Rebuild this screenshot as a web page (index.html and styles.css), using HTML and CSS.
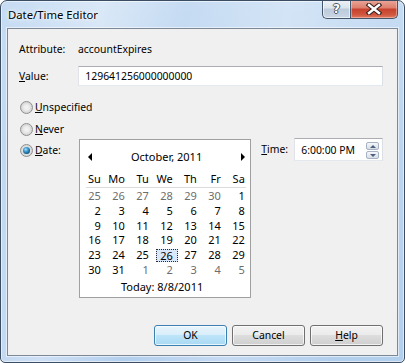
FILE: index.html
```html
<!DOCTYPE html>
<html>
<head>
<meta charset="utf-8">
<link rel="stylesheet" href="styles.css">
</head>
<body>
<div class="window">
  <div class="titlebar">
    <span class="title">Date/Time Editor</span>
    <div class="caption-btns">
      <div class="cap help"><span>?</span></div>
      <div class="cap close">
        <svg width="16" height="12" viewBox="0 0 16 12">
          <path d="M3 2 L13 10 M13 2 L3 10" stroke="#3a2220" stroke-width="4.6" stroke-linecap="square" fill="none"/>
          <path d="M3 2 L13 10 M13 2 L3 10" stroke="#ffffff" stroke-width="2.4" stroke-linecap="square" fill="none"/>
        </svg>
      </div>
    </div>
  </div>
  <div class="client">
    <div class="attr-row"><span class="attr-lbl">Attribute:</span><span>accountExpires</span></div>
    <div class="value-row"><span class="value-lbl"><u>V</u>alue:</span><div class="textbox">129641256000000000</div></div>
    <div class="radio-row first"><span class="radio"></span><span><u>U</u>nspecified</span></div>
    <div class="radio-row"><span class="radio"></span><span><u>N</u>ever</span></div>
    <div class="date-row">
      <div class="radio-row date-radio"><span class="radio checked"></span><span><u>D</u>ate:</span></div>
      <div class="calendar">
        <div class="cal-head"><span class="arr left"></span><span class="month">October, 2011</span><span class="arr right"></span></div>
        <div class="cal-days"><span>Su</span><span>Mo</span><span>Tu</span><span>We</span><span>Th</span><span>Fr</span><span>Sa</span></div>
        <div class="cal-sep"></div>
        <div class="cal-grid">
          <span class="g">25</span><span class="g">26</span><span class="g">27</span><span class="g">28</span><span class="g">29</span><span class="g">30</span><span>1</span>
          <span>2</span><span>3</span><span>4</span><span>5</span><span>6</span><span>7</span><span>8</span>
          <span>9</span><span>10</span><span>11</span><span>12</span><span>13</span><span>14</span><span>15</span>
          <span>16</span><span>17</span><span>18</span><span>19</span><span>20</span><span>21</span><span>22</span>
          <span>23</span><span>24</span><span>25</span><span class="sel"><span class="selbox">26</span></span><span>27</span><span>28</span><span>29</span>
          <span>30</span><span>31</span><span class="g">1</span><span class="g">2</span><span class="g">3</span><span class="g">4</span><span class="g">5</span>
        </div>
        <div class="cal-today">Today: 8/8/2011</div>
      </div>
      <span class="time-lbl"><u>T</u>ime:</span>
      <div class="timebox">
        <span class="time-text">6:00:00 PM</span>
        <div class="spin"><div class="spin-btn up"><span></span></div><div class="spin-btn down"><span></span></div></div>
      </div>
    </div>
    <div class="buttons">
      <div class="btn default">OK</div>
      <div class="btn">Cancel</div>
      <div class="btn"><u>H</u>elp</div>
    </div>
  </div>
</div>
</body>
</html>
```
FILE: styles.css
```css
html, body {
  margin: 0;
  padding: 0;
  background: #ffffff;
}
body {
  font-family: "Noto Sans", "Open Sans", sans-serif;
  font-size: 10.4px;
  color: #000;
}
u { text-decoration: underline; text-underline-offset: 1px; }

.window {
  width: 405px;
  height: 363px;
  box-sizing: border-box;
  border: 1px solid #3b4d63;
  border-radius: 7px 7px 5px 5px;
  background:
    linear-gradient(100deg, rgba(255,255,255,0) 0%, rgba(255,255,255,0.35) 22%, rgba(255,255,255,0) 40%, rgba(255,255,255,0.25) 62%, rgba(255,255,255,0) 85%),
    linear-gradient(180deg, #c6dcf3 0%, #bdd5ef 40%, #b3cfee 100%);
  box-shadow: inset 0 0 0 1px rgba(255,255,255,0.55);
  display: flex;
  flex-direction: column;
  overflow: hidden;
}

.titlebar {
  height: 27px;
  display: flex;
  align-items: flex-start;
}
.title {
  font-size: 11.3px;
  line-height: 14px;
  padding: 7px 0 0 7px;
  text-shadow: 0 0 6px #ffffff, 0 0 3px #ffffff;
}
.caption-btns {
  margin-left: auto;
  margin-right: 6px;
  margin-top: -1px;
  display: flex;
}
.cap {
  height: 19px;
  box-sizing: border-box;
  border: 1px solid #46566a;
  border-top: none;
  display: flex;
  align-items: center;
  justify-content: center;
}
.help {
  width: 28px;
  border-right: none;
  border-radius: 0 0 0 5px;
  background: linear-gradient(180deg, #eef2f7 0%, #dbe3ec 45%, #bccada 50%, #c8d6e5 100%);
  box-shadow: inset 0 0 0 1px rgba(255,255,255,0.6);
}
.help span {
  font-family: "DejaVu Sans", sans-serif;
  font-weight: bold;
  font-size: 12px;
  line-height: 12px;
  color: #ffffff;
  text-shadow: -1px 0 #4a5563, 1px 0 #4a5563, 0 -1px #4a5563, 0 1px #4a5563;
}
.close {
  width: 48px;
  border-radius: 0 0 5px 0;
  background: linear-gradient(180deg, #e9a89b 0%, #dc7d6b 45%, #c6412c 50%, #d0553e 80%, #e07a60 100%);
  box-shadow: inset 0 0 0 1px rgba(255,220,210,0.45);
}
.close svg { display: block; }

.client {
  margin: 0 6px 6px 6px;
  height: 328px;
  box-sizing: border-box;
  border: 1px solid #7d8897;
  background: #f0f0f0;
  box-shadow: 0 0 0 1px rgba(255,255,255,0.55);
  padding: 0 14px 9px 11px;
  display: flex;
  flex-direction: column;
}

.attr-row {
  margin-top: 12px;
  height: 16px;
  line-height: 16px;
  display: flex;
}
.attr-lbl { width: 59px; }

.value-row {
  margin-top: 9px;
  height: 20px;
  display: flex;
  align-items: center;
}
.value-lbl { width: 60px; }
.textbox {
  width: 308px;
  height: 20px;
  box-sizing: border-box;
  border: 1px solid;
  border-color: #abadb3 #dbdfe6 #e3e9ef #e2e3ea;
  background: #fff;
  padding-left: 6px;
  line-height: 18px;
}

.radio-row {
  height: 22px;
  display: flex;
  align-items: center;
  gap: 2px;
}
.radio-row.first { margin-top: 10px; }
.radio {
  width: 13px;
  height: 13px;
  margin-left: 1px;
  box-sizing: border-box;
  border-radius: 50%;
  border: 1px solid #8e8f8f;
  background: radial-gradient(circle at 50% 50%, #f4f4f4 0%, #ececec 35%, #d6d6d6 65%, #f7f7f7 100%);
  position: relative;
}
.radio.checked::after {
  content: "";
  position: absolute;
  left: 2px;
  top: 2px;
  width: 7px;
  height: 7px;
  border-radius: 50%;
  background: radial-gradient(circle at 40% 35%, #a8e0fb 0%, #3c9bd3 35%, #17537f 72%, #0e3453 100%);
}

.date-row {
  margin-top: -1px;
  display: flex;
  align-items: flex-start;
}
.date-radio { width: 60px; }

.calendar {
  width: 173px;
  height: 159px;
  box-sizing: border-box;
  border: 1px solid #a0a0a0;
  background: #fff;
  font-size: 11px;
}
.cal-head {
  margin-top: 6px;
  height: 22px;
  display: grid;
  grid-template-columns: 1fr auto 1fr;
  align-items: center;
  padding: 0 5px 0 8px;
}
.arr {
  width: 0;
  height: 0;
  border-top: 4px solid transparent;
  border-bottom: 4px solid transparent;
}
.arr.left { border-right: 4px solid #000; justify-self: start; }
.arr.right { border-left: 4px solid #000; justify-self: end; }
.month { line-height: 22px; }

.cal-days, .cal-grid {
  margin-left: 2px;
  display: grid;
  grid-template-columns: repeat(7, 24px);
}
.cal-days {
  margin-top: 3px;
  height: 16px;
  line-height: 16px;
}
.cal-days span, .cal-grid > span {
  text-align: right;
  padding-right: 5px;
}
.cal-sep {
  height: 1px;
  margin: 0 4px 0 6px;
  background: #dcdcdc;
}
.cal-grid {
  margin-top: 1px;
  grid-auto-rows: 14.8px;
  line-height: 14.8px;
}
.cal-grid .g { color: #6d6d6d; }
.cal-grid > span.sel {
  padding-right: 0;
  display: flex;
  align-items: center;
  justify-content: flex-end;
}
.selbox {
  width: 22px;
  height: 13px;
  box-sizing: border-box;
  border: 1px dotted #2a2a2a;
  background: #d8e7fa;
  text-align: right;
  padding-right: 4px;
  line-height: 11px;
}
.cal-today {
  margin-top: 1px;
  height: 16px;
  line-height: 16px;
  text-align: center;
  padding-right: 6px;
}

.time-lbl {
  margin-left: 10px;
  width: 33px;
  line-height: 20px;
}
.timebox {
  width: 89px;
  height: 23px;
  margin-top: -1px;
  box-sizing: border-box;
  border: 1px solid;
  border-color: #abadb3 #dbdfe6 #e3e9ef #e2e3ea;
  background: #fff;
  display: flex;
  align-items: center;
  padding-left: 6px;
}
.time-text { line-height: 20px; }
.spin {
  margin-left: auto;
  margin-right: 3px;
  margin-top: 2px;
  display: flex;
  flex-direction: column;
  gap: 1px;
}
.spin-btn {
  width: 13px;
  height: 8px;
  box-sizing: border-box;
  border: 1px solid #a7b3c2;
  border-radius: 2px;
  background: linear-gradient(180deg, #f6f8fa 0%, #e6eaef 50%, #d8dee6 100%);
  display: flex;
  align-items: center;
  justify-content: center;
}
.spin-btn span {
  width: 0;
  height: 0;
  border-left: 3px solid transparent;
  border-right: 3px solid transparent;
}
.up span { border-bottom: 3px solid #4c5f80; }
.down span { border-top: 3px solid #4c5f80; }

.buttons {
  margin-top: auto;
  display: flex;
  justify-content: flex-end;
  gap: 5px;
}
.btn {
  width: 73px;
  height: 21px;
  box-sizing: border-box;
  border: 1px solid #707070;
  border-radius: 3px;
  background: linear-gradient(180deg, #f2f2f2 0%, #ebebeb 50%, #dddddd 50%, #cfcfcf 100%);
  box-shadow: inset 0 0 0 1px rgba(255,255,255,0.7);
  text-align: center;
  line-height: 19px;
}
.btn.default {
  border-color: #3c7fb1;
  background: linear-gradient(180deg, #e9f5fc 0%, #d7eefb 50%, #bde4f9 50%, #a9d9f3 100%);
}
```
